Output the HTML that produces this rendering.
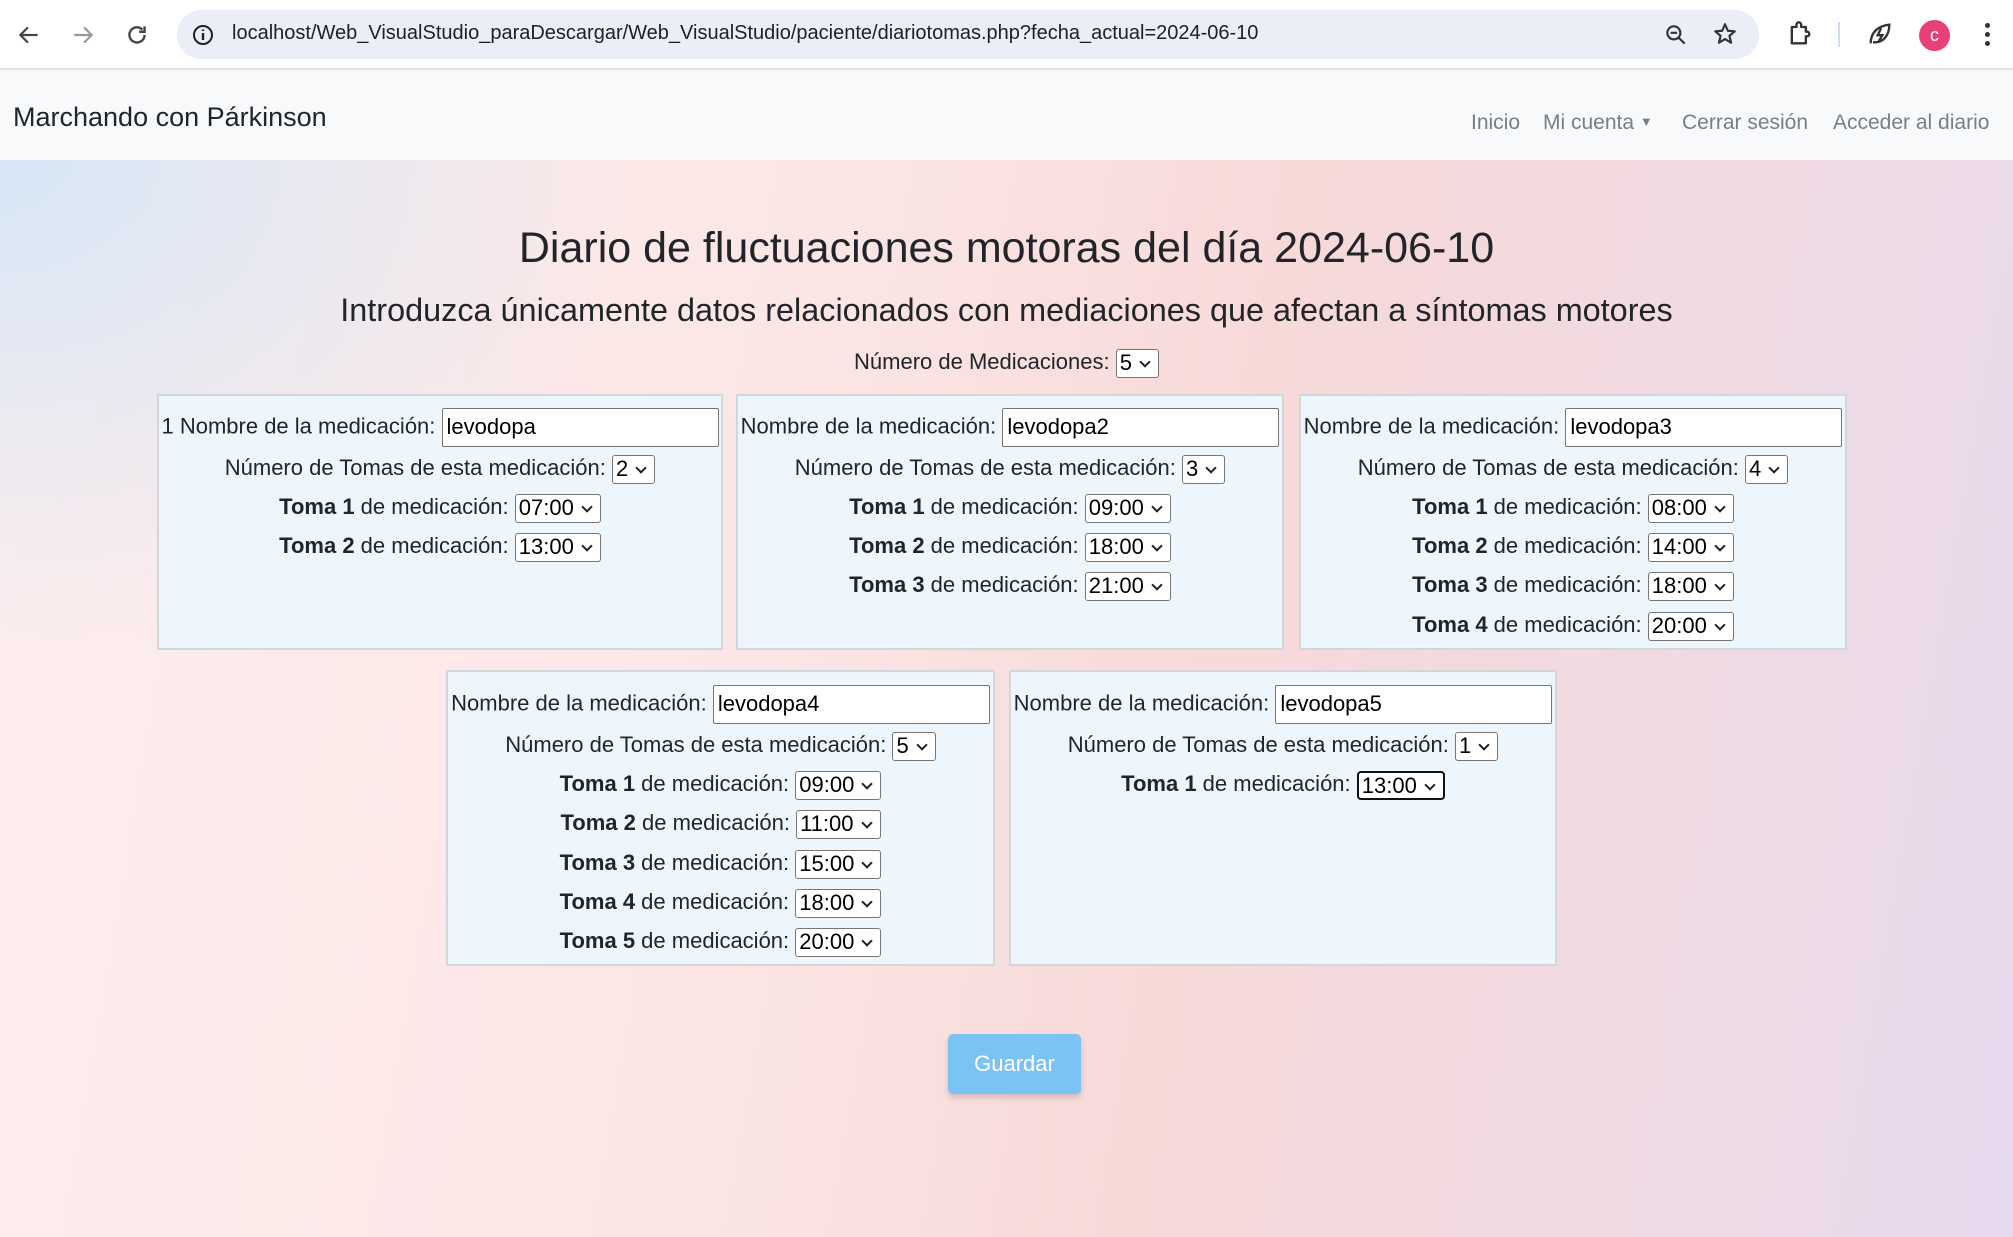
<!DOCTYPE html>
<html><head><meta charset="utf-8"><style>
*{box-sizing:border-box;margin:0;padding:0}
body{width:2013px;height:1237px;overflow:hidden;font-family:"Liberation Sans",Arial,sans-serif;color:#212529;position:relative;
background:radial-gradient(ellipse 900px 700px at 0 160px,rgba(214,230,246,1),rgba(214,230,246,0) 70%),linear-gradient(100deg,#fdeeee 0%,#fbe6e5 40%,#f7d9d8 60%,#ecdae8 90%,#e6d8ee 100%);}
.chrome{position:absolute;left:0;top:0;width:2013px;height:70px;background:#fff;border-bottom:2px solid #e0e0e0}
.url{position:absolute;left:177px;top:10px;width:1582px;height:49px;border-radius:25px;background:#ebeef7}
.url span{position:absolute;left:55px;top:12px;font-size:20px;color:#202124;white-space:nowrap}
.nav{position:absolute;left:0;top:70px;width:2013px;height:90px;background:#f8f9fa}
.brand{position:absolute;left:13px;top:102px;font-size:27px;color:#212529}
.nl{position:absolute;top:111px;font-size:21px;color:#7a7e83}
h1{position:absolute;top:224px;left:0;width:2013px;text-align:center;font-weight:400;font-size:43px;color:#212529}
h2{position:absolute;top:292px;left:0;width:2013px;text-align:center;font-weight:400;font-size:32.4px;color:#212529}
.box{position:absolute;background:#eef6fd;border:2px solid #d3d6da;font-size:22px}
.r{position:absolute;left:0;right:0;text-align:center;white-space:nowrap;height:30px;line-height:30px}
.inp{display:inline-block;vertical-align:middle;height:39px;border:1.5px solid #767676;border-radius:2px;background:#fff;text-align:left;padding-left:4px;line-height:36px;color:#000}
.sel{display:inline-block;vertical-align:middle;height:29px;border:1.5px solid #767676;border-radius:3px;background:#fff;line-height:26px;padding:0 26px 0 3px;position:relative;color:#000;text-align:left}
.sel:after{content:"";position:absolute;right:9px;top:8px;width:6px;height:6px;border-right:2px solid #222;border-bottom:2px solid #222;transform:rotate(45deg)}
b{font-weight:700}
.btn{position:absolute;left:948px;top:1034px;width:133px;height:60px;background:#7cc3f5;border-radius:5px;color:#fff;font-size:22px;text-align:center;line-height:60px;box-shadow:0 4px 6px rgba(0,0,0,.15)}
</style></head><body>
<div class="chrome">
<svg style="position:absolute;left:16px;top:22px" width="26" height="26" viewBox="0 0 24 24"><path d="M20 12H5M11 5l-7 7 7 7" fill="none" stroke="#444" stroke-width="2"/></svg>
<svg style="position:absolute;left:70px;top:22px" width="26" height="26" viewBox="0 0 24 24"><path d="M4 12h15M13 5l7 7-7 7" fill="none" stroke="#999" stroke-width="2"/></svg>
<svg style="position:absolute;left:124px;top:22px" width="26" height="26" viewBox="0 0 24 24"><path d="M19 12a7 7 0 1 1-2-5M19 4v5h-5" fill="none" stroke="#444" stroke-width="2.2"/></svg>
<div class="url"><svg style="position:absolute;left:14px;top:13px" width="24" height="24" viewBox="0 0 24 24"><circle cx="12" cy="12" r="9" fill="none" stroke="#222" stroke-width="2"/><path d="M12 10v7M12 6.5v1.5" stroke="#222" stroke-width="2.4"/></svg><span>localhost/Web_VisualStudio_paraDescargar/Web_VisualStudio/paciente/diariotomas.php?fecha_actual=2024-06-10</span>
<svg style="position:absolute;left:1486px;top:12px" width="26" height="26" viewBox="0 0 24 24"><circle cx="10" cy="10" r="6" fill="none" stroke="#333" stroke-width="2"/><path d="M14.5 14.5L20 20M7 10h6" stroke="#333" stroke-width="2"/></svg>
<svg style="position:absolute;left:1535px;top:11px" width="26" height="26" viewBox="0 0 24 24"><path d="M12 3l2.6 6 6.4.5-4.9 4.2 1.5 6.3L12 16.7 6.4 20l1.5-6.3L3 9.5 9.4 9z" fill="none" stroke="#333" stroke-width="2" stroke-linejoin="round"/></svg></div>
<svg style="position:absolute;left:1786px;top:20px" width="28" height="28" viewBox="0 0 24 24"><path d="M5 6h4V4a2 2 0 0 1 4 0v2h4v4h1a2 2 0 0 1 0 4h-1v6H5z" fill="none" stroke="#333" stroke-width="2" stroke-linejoin="round"/></svg>
<div style="position:absolute;left:1838px;top:22px;width:2px;height:25px;background:#cfdcf5"></div>
<svg style="position:absolute;left:1866px;top:20px" width="28" height="28" viewBox="0 0 24 24"><path d="M4 20c0-9 6-15 16-16 0 10-6 16-14 15M13 7l-3 6h4l-3 5" fill="none" stroke="#333" stroke-width="2"/></svg>
<div style="position:absolute;left:1919px;top:20px;width:31px;height:31px;border-radius:50%;background:#e8407a;color:#fff;font-size:18px;text-align:center;line-height:31px">c</div>
<div style="position:absolute;left:1985px;top:23px;width:5px;height:5px;border-radius:50%;background:#333;box-shadow:0 9px 0 #333,0 18px 0 #333"></div>
</div>
<div class="nav"></div>
<div class="brand">Marchando con Párkinson</div>
<div class="nl" style="left:1471px">Inicio</div>
<div class="nl" style="left:1543px">Mi cuenta <span style="font-size:13px;position:relative;top:-3px">▼</span></div>
<div class="nl" style="left:1682px">Cerrar sesión</div>
<div class="nl" style="left:1833px">Acceder al diario</div>
<h1>Diario de fluctuaciones motoras del día 2024-06-10</h1>
<h2>Introduzca únicamente datos relacionados con mediaciones que afectan a síntomas motores</h2>
<div class="r" style="top:347px;font-size:22px">Número de Medicaciones: <span class="sel">5</span></div>

<div class="box" style="left:157px;top:394px;width:566px;height:256px">
<div class="r" style="top:12px">1 Nombre de la medicación: <span class="inp" style="width:277px">levodopa</span></div>
<div class="r" style="top:57px">Número de Tomas de esta medicación: <span class="sel">2</span></div>
<div class="r" style="top:96px"><b>Toma 1</b> de medicación: <span class="sel">07:00</span></div>
<div class="r" style="top:135px"><b>Toma 2</b> de medicación: <span class="sel">13:00</span></div>
</div>
<div class="box" style="left:736px;top:394px;width:548px;height:256px">
<div class="r" style="top:12px">Nombre de la medicación: <span class="inp" style="width:277px">levodopa2</span></div>
<div class="r" style="top:57px">Número de Tomas de esta medicación: <span class="sel">3</span></div>
<div class="r" style="top:96px"><b>Toma 1</b> de medicación: <span class="sel">09:00</span></div>
<div class="r" style="top:135px"><b>Toma 2</b> de medicación: <span class="sel">18:00</span></div>
<div class="r" style="top:174px"><b>Toma 3</b> de medicación: <span class="sel">21:00</span></div>
</div>
<div class="box" style="left:1299px;top:394px;width:548px;height:256px">
<div class="r" style="top:12px">Nombre de la medicación: <span class="inp" style="width:277px">levodopa3</span></div>
<div class="r" style="top:57px">Número de Tomas de esta medicación: <span class="sel">4</span></div>
<div class="r" style="top:96px"><b>Toma 1</b> de medicación: <span class="sel">08:00</span></div>
<div class="r" style="top:135px"><b>Toma 2</b> de medicación: <span class="sel">14:00</span></div>
<div class="r" style="top:174px"><b>Toma 3</b> de medicación: <span class="sel">18:00</span></div>
<div class="r" style="top:214px"><b>Toma 4</b> de medicación: <span class="sel">20:00</span></div>
</div>
<div class="box" style="left:446px;top:670px;width:549px;height:296px">
<div class="r" style="top:13px">Nombre de la medicación: <span class="inp" style="width:277px">levodopa4</span></div>
<div class="r" style="top:58px">Número de Tomas de esta medicación: <span class="sel">5</span></div>
<div class="r" style="top:97px"><b>Toma 1</b> de medicación: <span class="sel">09:00</span></div>
<div class="r" style="top:136px"><b>Toma 2</b> de medicación: <span class="sel">11:00</span></div>
<div class="r" style="top:176px"><b>Toma 3</b> de medicación: <span class="sel">15:00</span></div>
<div class="r" style="top:215px"><b>Toma 4</b> de medicación: <span class="sel">18:00</span></div>
<div class="r" style="top:254px"><b>Toma 5</b> de medicación: <span class="sel">20:00</span></div>
</div>
<div class="box" style="left:1009px;top:670px;width:548px;height:296px">
<div class="r" style="top:13px">Nombre de la medicación: <span class="inp" style="width:277px">levodopa5</span></div>
<div class="r" style="top:58px">Número de Tomas de esta medicación: <span class="sel">1</span></div>
<div class="r" style="top:97px"><b>Toma 1</b> de medicación: <span class="sel" style="border:2.5px solid #111;border-radius:4px">13:00</span></div>
</div>
<div class="btn">Guardar</div>
</body></html>
